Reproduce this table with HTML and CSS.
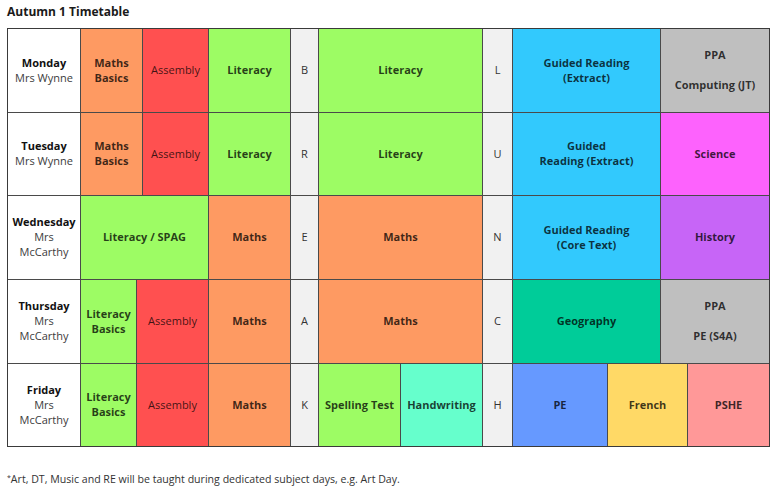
FILE: index.html
```html
<!DOCTYPE html>
<html lang="en">
<head>
<meta charset="utf-8">
<title>Autumn 1 Timetable</title>
<link rel="stylesheet" href="styles.css">
</head>
<body>
<h1 class="title">Autumn 1 Timetable</h1>
<div class="timetable">
  <!-- Monday -->
  <div class="cell day"><b>Monday</b><span>Mrs Wynne</span></div>
  <div class="cell maths c2-3">Maths<br>Basics</div>
  <div class="cell assembly c4 reg">Assembly</div>
  <div class="cell literacy c5">Literacy</div>
  <div class="cell brk c6">B</div>
  <div class="cell literacy c7-8">Literacy</div>
  <div class="cell brk c9">L</div>
  <div class="cell reading c10-11">Guided Reading<br>(Extract)</div>
  <div class="cell ppa c12-13">PPA<br><br>Computing (JT)</div>

  <!-- Tuesday -->
  <div class="cell day"><b>Tuesday</b><span>Mrs Wynne</span></div>
  <div class="cell maths c2-3">Maths<br>Basics</div>
  <div class="cell assembly c4 reg">Assembly</div>
  <div class="cell literacy c5">Literacy</div>
  <div class="cell brk c6">R</div>
  <div class="cell literacy c7-8">Literacy</div>
  <div class="cell brk c9">U</div>
  <div class="cell reading c10-11">Guided<br>Reading (Extract)</div>
  <div class="cell science c12-13">Science</div>

  <!-- Wednesday -->
  <div class="cell day"><b>Wednesday</b><span>Mrs<br>McCarthy</span></div>
  <div class="cell literacy c2-4">Literacy / SPAG</div>
  <div class="cell maths c5">Maths</div>
  <div class="cell brk c6">E</div>
  <div class="cell maths c7-8">Maths</div>
  <div class="cell brk c9">N</div>
  <div class="cell reading c10-11">Guided Reading<br>(Core Text)</div>
  <div class="cell history c12-13">History</div>

  <!-- Thursday -->
  <div class="cell day"><b>Thursday</b><span>Mrs<br>McCarthy</span></div>
  <div class="cell literacy c2">Literacy<br>Basics</div>
  <div class="cell assembly c3-4 reg">Assembly</div>
  <div class="cell maths c5">Maths</div>
  <div class="cell brk c6">A</div>
  <div class="cell maths c7-8">Maths</div>
  <div class="cell brk c9">C</div>
  <div class="cell geography c10-11">Geography</div>
  <div class="cell ppa c12-13">PPA<br><br>PE (S4A)</div>

  <!-- Friday -->
  <div class="cell day"><b>Friday</b><span>Mrs<br>McCarthy</span></div>
  <div class="cell literacy c2">Literacy<br>Basics</div>
  <div class="cell assembly c3-4 reg">Assembly</div>
  <div class="cell maths c5">Maths</div>
  <div class="cell brk c6">K</div>
  <div class="cell literacy c7">Spelling Test</div>
  <div class="cell handwriting c8">Handwriting</div>
  <div class="cell brk c9">H</div>
  <div class="cell pe c10">PE</div>
  <div class="cell french c11-12">French</div>
  <div class="cell pshe c13">PSHE</div>
</div>
<p class="note"><sup>*</sup>Art, DT, Music and RE will be taught during dedicated subject days, e.g. Art Day.</p>
</body>
</html>
```
FILE: styles.css
```css
html, body {
  margin: 0;
  padding: 0;
  background: #ffffff;
}

body {
  font-family: "Open Sans", "DejaVu Sans", sans-serif;
  font-size: 11px;
  line-height: 15px;
  color: #222;
  padding: 4px 0 0 7px;
}

.title {
  margin: 0 0 8px 0;
  font-size: 12px;
  line-height: 16px;
  font-weight: 700;
  color: #1a1a1a;
}

.timetable {
  display: grid;
  width: 761px;
  grid-template-columns: 72px 55px 5px 65px 81px 27px 81px 81px 29px 94px 52px 26px 81px;
  grid-template-rows: 83px 82px 83px 83px 82px;
  gap: 1px;
  background: #4a4a4a;
  border: 1px solid #3a3a3a;
}

.cell {
  display: flex;
  flex-direction: column;
  align-items: center;
  justify-content: center;
  text-align: center;
  font-weight: 700;
  color: rgba(0, 0, 0, 0.76);
  padding-bottom: 2px;
}

.reg {
  font-weight: 400;
}

.day {
  grid-column: 1;
  background: #ffffff;
  color: #111;
}

.day b {
  font-weight: 700;
}

.day span {
  font-weight: 400;
  color: #3c3c3c;
}

.c2 { grid-column: 2; }
.c2-3 { grid-column: 2 / span 2; }
.c2-4 { grid-column: 2 / span 3; }
.c3-4 { grid-column: 3 / span 2; }
.c4 { grid-column: 4; }
.c5 { grid-column: 5; }
.c6 { grid-column: 6; }
.c7 { grid-column: 7; }
.c7-8 { grid-column: 7 / span 2; }
.c8 { grid-column: 8; }
.c9 { grid-column: 9; }
.c10 { grid-column: 10; }
.c10-11 { grid-column: 10 / span 2; }
.c11-12 { grid-column: 11 / span 2; }
.c12-13 { grid-column: 12 / span 2; }
.c13 { grid-column: 13; }

.maths { background: #fe9a62; }
.assembly { background: #ff5050; }
.literacy { background: #9dfc64; }
.brk { background: #f1f1f1; font-weight: 400; color: #333; }
.reading { background: #32c9fd; }
.ppa { background: #bfbfbf; }
.science { background: #fd62fd; }
.history { background: #c765f7; }
.geography { background: #00cc99; }
.handwriting { background: #66ffcc; }
.pe { background: #6699ff; }
.french { background: #ffd966; }
.pshe { background: #ff9898; }

.note {
  margin: 25px 0 0 0;
  font-size: 10.6px;
  line-height: 15px;
  color: #333;
}

.note sup {
  font-size: 7px;
  line-height: 0;
  vertical-align: 3px;
}
```
